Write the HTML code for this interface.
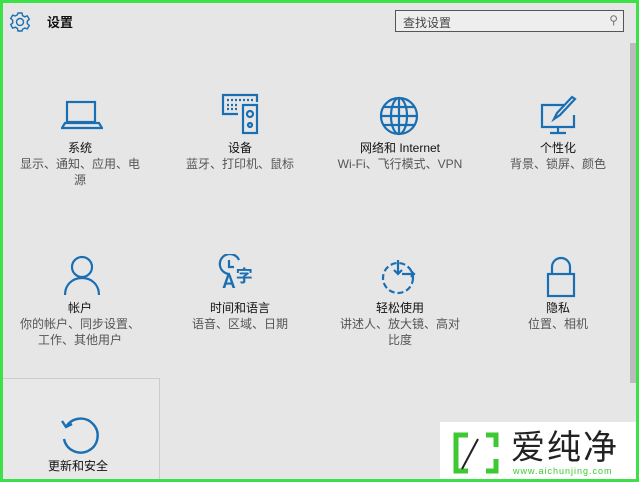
<!DOCTYPE html>
<html><head><meta charset="utf-8"><style>
body{margin:0;width:639px;height:482px;overflow:hidden;background:#3ee04a;font-family:"Liberation Sans","Noto Sans CJK SC",sans-serif;}
#w{position:absolute;left:3px;top:3px;width:633px;height:476px;background:#e6e6e6;overflow:hidden}
.t{position:absolute;width:150px;text-align:center;font-size:12px;color:#111}
.t .d{color:#555;line-height:16px}
.t .n{line-height:16px}
svg{position:absolute}
</style></head><body><div id="w">
<svg style="left:6px;top:8px" width="22" height="22" viewBox="0 0 22 22" fill="none" stroke="#1a6fb3" stroke-width="1.4"><circle cx="11" cy="11" r="3.5"/><path d="M9 2h4l.6 2.6 2.2 1.2 2.5-.9 2 3.4-2 1.8v2.6l2 1.8-2 3.4-2.5-.9-2.2 1.2L13 20H9l-.6-2.6-2.2-1.2-2.5.9-2-3.4 2-1.8V9.3l-2-1.8 2-3.4 2.5.9 2.2-1.2z"/></svg>
<div style="position:absolute;left:44px;top:9px;font-size:13px;font-weight:bold;color:#111">设置</div>
<div style="position:absolute;left:392px;top:7px;width:229px;height:22px;border:1px solid #555;background:#eee;box-sizing:border-box;font-size:12px;color:#444;padding:3px 7px">查找设置<span style="position:absolute;right:5px;top:2px;color:#777">⚲</span></div>
<div style="position:absolute;left:627px;top:40px;width:6px;height:340px;background:#bbb"></div>
<!-- row1 icons -->
<svg style="left:58px;top:95px" width="42" height="35" viewBox="0 0 42 35" fill="none" stroke="#1a6fb3" stroke-width="2.2"><rect x="6" y="4" width="28" height="20"/><path d="M1 30h40l-3-5H4z"/></svg>
<svg style="left:218px;top:90px" width="42" height="42" viewBox="0 0 42 42" fill="none" stroke="#1a6fb3" stroke-width="2.2"><path d="M17 21H2V2h34v7"/><rect x="22" y="12" width="14" height="28"/><circle cx="29" cy="21" r="3"/><circle cx="29" cy="32" r="2"/><path d="M6 7h26M6 12h12M6 16h12" stroke-dasharray="2 2"/></svg>
<svg style="left:374px;top:92px" width="44" height="42" viewBox="0 0 44 42" fill="none" stroke="#1a6fb3" stroke-width="2.2"><circle cx="22" cy="21" r="18"/><ellipse cx="22" cy="21" rx="8" ry="18"/><path d="M4 21h36M7 12h30M7 30h30M22 3v36"/></svg>
<svg style="left:535px;top:92px" width="42" height="42" viewBox="0 0 42 42" fill="none" stroke="#1a6fb3" stroke-width="2.2"><path d="M26 10H4v22h32V20M20 32v6M12 38h16"/><path d="M37 4L22 20l-6 4 3-6L34 2z"/></svg>
<div class="t" style="left:2px;top:137px"><div class="n">系统</div><div class="d">显示、通知、应用、电<br>源</div></div>
<div class="t" style="left:162px;top:137px"><div class="n">设备</div><div class="d">蓝牙、打印机、鼠标</div></div>
<div class="t" style="left:322px;top:137px"><div class="n">网络和 Internet</div><div class="d">Wi-Fi、飞行模式、VPN</div></div>
<div class="t" style="left:480px;top:137px"><div class="n">个性化</div><div class="d">背景、锁屏、颜色</div></div>
<!-- row2 icons -->
<svg style="left:59px;top:251px" width="40" height="42" viewBox="0 0 40 42" fill="none" stroke="#1a6fb3" stroke-width="2.2"><circle cx="20" cy="13" r="10"/><path d="M3 41c0-10 7-17 17-17s17 7 17 17"/></svg>
<svg style="left:214px;top:251px" width="44" height="44" viewBox="0 0 44 44" fill="none" stroke="#1a6fb3" stroke-width="2.2"><path d="M13 20A10 10 0 1 1 22 6"/><path d="M12 6v7h5"/></svg>
<div style="position:absolute;left:219px;top:264px;font-size:19px;font-weight:bold;color:#1a6fb3;line-height:20px;font-family:'Liberation Sans','Noto Sans CJK SC',sans-serif">A<span style="font-size:17px;vertical-align:6px">字</span></div>
<svg style="left:375px;top:253px" width="44" height="42" viewBox="0 0 44 42" fill="none" stroke="#1a6fb3" stroke-width="2.2"><circle cx="20" cy="22" r="15" stroke-dasharray="6 3"/><path d="M20 4v14M16 14l4 4 4-4M24 18h12M33 15l3 3-3 3"/></svg>
<svg style="left:542px;top:253px" width="32" height="42" viewBox="0 0 32 42" fill="none" stroke="#1a6fb3" stroke-width="2.2"><path d="M7 18V11a9 9 0 0 1 18 0v7"/><rect x="3" y="18" width="26" height="22"/></svg>
<div class="t" style="left:2px;top:297px"><div class="n">帐户</div><div class="d">你的帐户、同步设置、<br>工作、其他用户</div></div>
<div class="t" style="left:162px;top:297px"><div class="n">时间和语言</div><div class="d">语音、区域、日期</div></div>
<div class="t" style="left:322px;top:297px"><div class="n">轻松使用</div><div class="d">讲述人、放大镜、高对<br>比度</div></div>
<div class="t" style="left:480px;top:297px"><div class="n">隐私</div><div class="d">位置、相机</div></div>
<div style="position:absolute;left:0;top:375px;width:156px;height:110px;border-top:1px solid #ccc;border-right:1px solid #ccc;background:#e8e8e8"></div>
<svg style="left:55px;top:410px" width="44" height="44" viewBox="0 0 44 44" fill="none" stroke="#1a6fb3" stroke-width="2.4"><path d="M8 14A17 17 0 1 1 6 26"/><path d="M4 8l4 6 6-3"/></svg>
<div class="t" style="left:0;top:455px"><div class="n">更新和安全</div></div>
<div style="position:absolute;left:437px;top:419px;width:200px;height:70px;background:#fff"></div>
<svg style="left:447px;top:428px" width="60" height="44" viewBox="0 0 60 44" fill="none" stroke="#3ec832" stroke-width="5"><path d="M18 4H6v36h12M36 4h10v12M46 28v12H36"/><path d="M12 38L28 8" stroke="#222" stroke-width="2"/></svg>
<div style="position:absolute;left:508px;top:425px;font-size:34px;color:#222;letter-spacing:2px;line-height:40px">爱纯净</div>
<div style="position:absolute;left:510px;top:463px;font-size:9px;color:#3ec832;letter-spacing:1px">www.aichunjing.com</div>
</div></body></html>
